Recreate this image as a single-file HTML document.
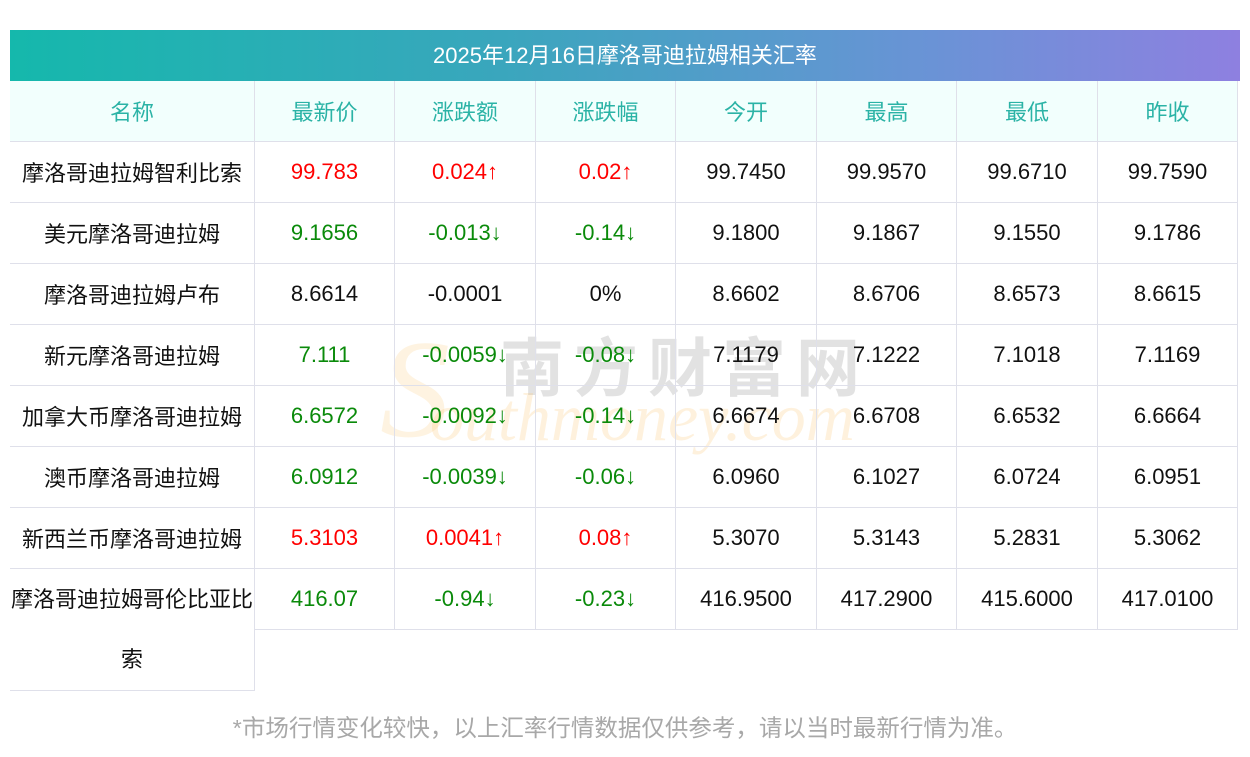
<!DOCTYPE html>
<html><head><meta charset="utf-8"><style>
*{margin:0;padding:0;box-sizing:border-box}
body{width:1250px;height:757px;background:#fff;position:relative;overflow:hidden;font-family:"Liberation Sans","Noto Sans CJK SC",sans-serif}
.title{position:absolute;left:10px;top:30px;width:1230px;height:51px;background:linear-gradient(90deg,#15b8ac,#3aa6bd 40%,#6a93d6 75%,#8e80e0);color:#fff;font-size:22px;line-height:51px;text-align:center}
.c{position:absolute;display:flex;align-items:center;justify-content:center;font-size:22px;color:#111;border-right:1px solid #dfe0ea;border-bottom:1px solid #dfe0ea;text-align:center;white-space:nowrap}
.h{background:#f2fffd;color:#2bb3a6}
.r{color:#f00}.g{color:#0a8a0a}
.foot{position:absolute;left:0;width:1250px;top:709px;text-align:center;font-size:23.5px;color:#a8a8a8}
.wm1{position:absolute;left:500px;top:318px;font-size:64px;color:rgba(160,160,160,.3);letter-spacing:10px;font-weight:bold}
.wm2{position:absolute;left:430px;top:378px;font-size:68px;font-style:italic;color:rgba(250,200,120,.25);font-family:"Liberation Serif",serif}
.wm3{position:absolute;left:380px;top:320px;font-size:140px;font-style:italic;color:rgba(250,200,120,.22);font-family:"Liberation Serif",serif;line-height:1}
</style></head><body>
<div class="title">2025年12月16日摩洛哥迪拉姆相关汇率</div>
<div class="wm3">S</div><div class="wm1">南方财富网</div><div class="wm2">outhmoney.com</div>
<div id="t"></div>
<div class="foot">*市场行情变化较快，以上汇率行情数据仅供参考，请以当时最新行情为准。</div>
<script>
var xs=[10,255,395,536,676,817,957,1098,1238];
var rows=[
["h","名称","最新价","涨跌额","涨跌幅","今开","最高","最低","昨收"],
["r","摩洛哥迪拉姆智利比索","99.783","0.024↑","0.02↑","99.7450","99.9570","99.6710","99.7590"],
["g","美元摩洛哥迪拉姆","9.1656","-0.013↓","-0.14↓","9.1800","9.1867","9.1550","9.1786"],
["","摩洛哥迪拉姆卢布","8.6614","-0.0001","0%","8.6602","8.6706","8.6573","8.6615"],
["g","新元摩洛哥迪拉姆","7.111","-0.0059↓","-0.08↓","7.1179","7.1222","7.1018","7.1169"],
["g","加拿大币摩洛哥迪拉姆","6.6572","-0.0092↓","-0.14↓","6.6674","6.6708","6.6532","6.6664"],
["g","澳币摩洛哥迪拉姆","6.0912","-0.0039↓","-0.06↓","6.0960","6.1027","6.0724","6.0951"],
["r","新西兰币摩洛哥迪拉姆","5.3103","0.0041↑","0.08↑","5.3070","5.3143","5.2831","5.3062"],
["g","摩洛哥迪拉姆哥伦比亚比<br>索","416.07","-0.94↓","-0.23↓","416.9500","417.2900","415.6000","417.0100"]];
var h="";
rows.forEach(function(r,i){
 var y=81+i*61;
 for(var j=0;j<8;j++){
  var cls="c";
  if(r[0]=="h")cls+=" h";
  else if(j>=1&&j<=3)cls+=" "+r[0];
  var ht=61,extra="";
  if(i==8&&j==0){ht=122;extra="line-height:60px;";}
  if(j==0&&i>0&&i<8)extra="color:#111;";
  h+='<div class="'+cls+'" style="left:'+xs[j]+'px;top:'+y+'px;width:'+(xs[j+1]-xs[j])+'px;height:'+ht+'px;'+extra+'">'+r[j+1]+'</div>';
 }
});
document.getElementById("t").innerHTML=h;
</script>
</body></html>
